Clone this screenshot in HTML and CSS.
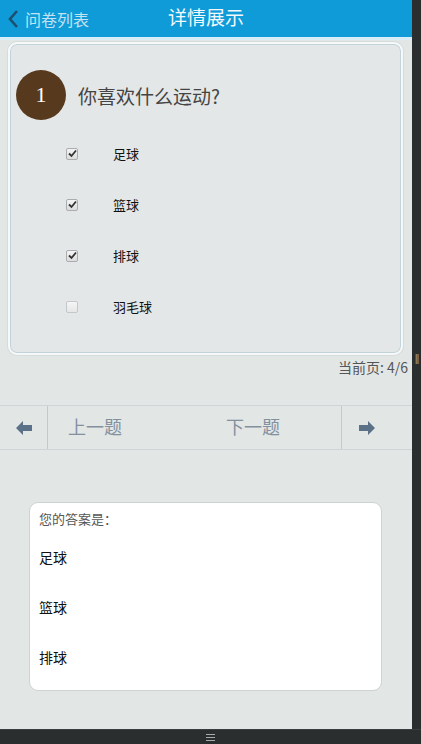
FILE: index.html
```html
<!DOCTYPE html>
<html lang="zh">
<head>
<meta charset="utf-8">
<link rel="stylesheet" href="styles.css">
</head>
<body>
<div class="frame">
  <div class="page">
    <header class="topbar">
      <a class="back">
        <svg width="12" height="20" viewBox="0 0 12 20"><path d="M10 2 L3 10 L10 18" fill="none" stroke="#1d4f6e" stroke-width="2.6"/></svg>
        <span>问卷列表</span>
      </a>
      <h1 class="title">详情展示</h1>
    </header>
    <div class="topline"></div>
    <section class="qcard">
      <div class="qhead">
        <div class="num">1</div>
        <div class="qtext">你喜欢什么运动?</div>
      </div>
      <ul class="opts">
        <li><span class="cb on"><svg width="9" height="9" viewBox="0 0 9 9"><path d="M1 4.5 L3.5 7 L8 1.5" fill="none" stroke="#333" stroke-width="1.8"/></svg></span><span class="lbl">足球</span></li>
        <li><span class="cb on"><svg width="9" height="9" viewBox="0 0 9 9"><path d="M1 4.5 L3.5 7 L8 1.5" fill="none" stroke="#333" stroke-width="1.8"/></svg></span><span class="lbl">篮球</span></li>
        <li><span class="cb on"><svg width="9" height="9" viewBox="0 0 9 9"><path d="M1 4.5 L3.5 7 L8 1.5" fill="none" stroke="#333" stroke-width="1.8"/></svg></span><span class="lbl">排球</span></li>
        <li><span class="cb"></span><span class="lbl">羽毛球</span></li>
      </ul>
    </section>
    <div class="pageinfo">当前页: 4/6</div>
    <nav class="pager">
      <div class="arrow left">
        <svg width="16" height="14" viewBox="0 0 16 14"><path d="M0 7 L7 0 L7 4 L16 4 L16 10 L7 10 L7 14 Z" fill="#5b7187"/></svg>
      </div>
      <div class="mid">
        <span class="prev">上一题</span>
        <span class="next">下一题</span>
      </div>
      <div class="arrow right">
        <svg width="16" height="14" viewBox="0 0 16 14"><path d="M16 7 L9 0 L9 4 L0 4 L0 10 L9 10 L9 14 Z" fill="#5b7187"/></svg>
      </div>
    </nav>
    <section class="answer">
      <div class="alabel">您的答案是：</div>
      <div class="aitem">足球</div>
      <div class="aitem">篮球</div>
      <div class="aitem">排球</div>
    </section>
  </div>
  <div class="side"><span class="grip">||</span></div>
</div>
<div class="bottombar"><span class="handle"></span></div>
</body>
</html>
```
FILE: styles.css
```css
* { box-sizing: border-box; }
html, body { margin: 0; padding: 0; }
body {
  width: 421px; height: 744px; overflow: hidden;
  font-family: "Noto Sans CJK SC", "Liberation Sans", sans-serif;
  background: #2b2e2e;
}
.frame { display: flex; height: 729px; }
.page { width: 412px; background: #e2e6e5; display: flex; flex-direction: column; }
.side { width: 9px; background: #2b2e2e; display: flex; flex-direction: column; align-items: center; padding-top: 352px; }
.grip { color: #a0a0a0; font-size: 11px; font-family: "Liberation Sans", sans-serif; letter-spacing: -1px; }
.topbar {
  height: 37px; background: #0f9bd8; display: flex; align-items: center; position: relative;
}
.back { display: flex; align-items: center; gap: 6px; padding-left: 7px; color: #c4e2f2; font-size: 16px; }
.back span { line-height: 1; }
.title {
  margin: 0; position: absolute; left: 0; right: 0; top: 0; height: 37px; line-height: 34px;
  text-align: center; font-size: 19px; font-weight: normal; color: #f2f8fb; pointer-events: none;
}
.topline { height: 3px; background: #d7eef8; }
.qcard {
  margin: 2px 9px 0 8px; height: 313px;
  background: #e3e7e7;
  border: 2px solid #f7f9f9; border-radius: 9px;
  box-shadow: inset 0 0 0 1px #c3d3dc, 0 0 0 1px #d5dcde;
  padding: 26px 0 0 6px;
}
.qhead { display: flex; align-items: center; gap: 12px; }
.num {
  width: 50px; height: 50px; border-radius: 50%; background: #573a1e; color: #fff;
  font-family: "Liberation Serif", serif; font-size: 22px; display: flex; align-items: center; justify-content: center;
}
.qtext { font-size: 19px; color: #444; }
.opts { list-style: none; margin: 8px 0 0 0; padding: 0; }
.opts li { height: 51px; display: flex; align-items: center; padding-left: 50px; font-size: 13px; color: #111; }
.cb {
  width: 12px; height: 12px; border: 1px solid #a9adb0; border-radius: 2px;
  background: linear-gradient(#f4f4f4, #dcdcdc);
  display: flex; align-items: center; justify-content: center;
}
.cb:not(.on) { border-color: #c4c8ca; background: linear-gradient(#f6f6f6, #e6e6e6); }
.lbl { margin-left: 35px; }
.pageinfo { text-align: right; padding-right: 4px; margin-top: 2px; font-size: 14px; color: #555; height: 20px; line-height: 20px; }
.pager {
  margin-top: 28px; height: 45px; display: flex;
  border-top: 1px solid #cfd5d6; border-bottom: 1px solid #cfd5d6;
}
.arrow { display: flex; align-items: center; }
.arrow.left { width: 48px; justify-content: center; border-right: 1px solid #c4cacc; }
.arrow.right { width: 71px; padding-left: 17px; border-left: 1px solid #c4cacc; }
.mid { flex: 1; display: flex; align-items: center; font-size: 18px; color: #8290a0; padding-bottom: 3px; }
.prev { margin-left: 20px; }
.next { margin-left: 104px; }
.answer {
  margin: 52px 30px 0 29px; height: 189px; background: #fff;
  border: 1px solid #cdd2d3; border-radius: 9px; padding: 6px 0 0 9px;
}
.alabel { font-size: 13px; color: #555; line-height: 20px; }
.aitem { font-size: 14px; color: #111; line-height: 20px; margin-top: 18px; }
.aitem + .aitem { margin-top: 30px; }
.bottombar { height: 15px; background: #2b2e2e; display: flex; justify-content: center; align-items: center; border-top: 1px solid #3a3d3d; }
.handle { width: 9px; height: 7px; border-top: 1px solid #aaa; border-bottom: 1px solid #aaa; position: relative; }
.handle::after { content: ""; position: absolute; left: 0; right: 0; top: 2px; border-top: 1px solid #aaa; }
```
